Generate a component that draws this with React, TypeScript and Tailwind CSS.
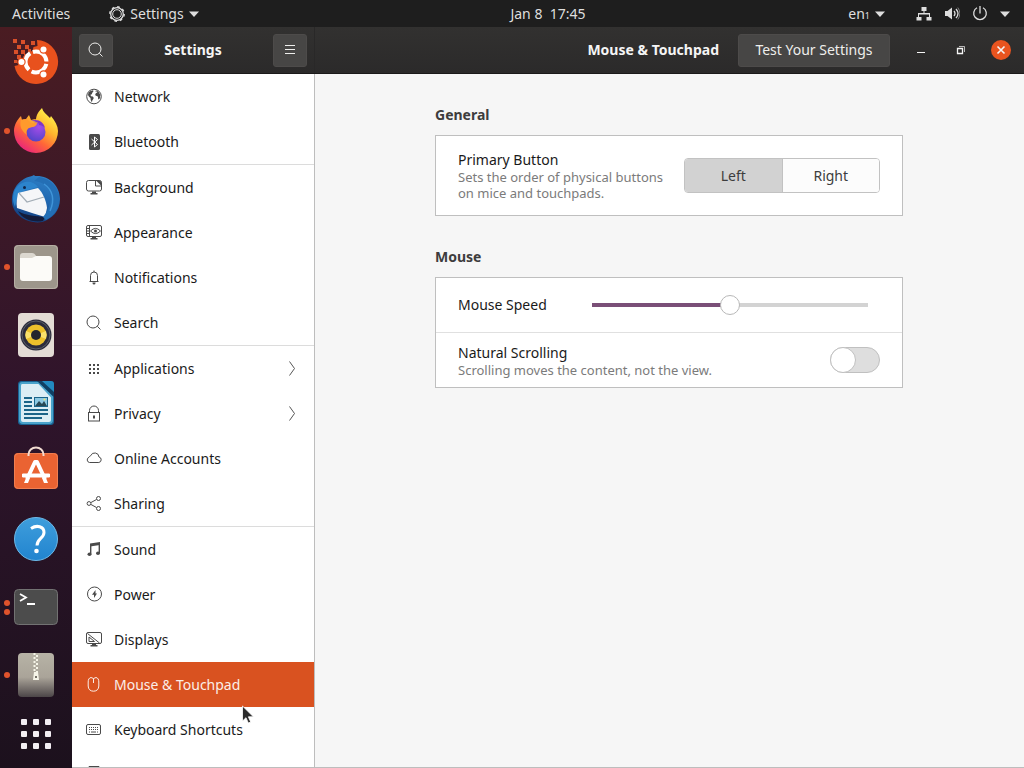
import { useState, type ReactNode } from "react";
import clsx from "clsx";

type NavItem = { label: string; icon: ReactNode; arrow?: boolean };

function Glyph({ children }: { children: ReactNode }) {
  return (
    <svg
      viewBox="0 0 16 16"
      className="h-4 w-4 shrink-0 overflow-visible"
      fill="none"
      stroke="currentColor"
      aria-hidden="true"
    >
      {children}
    </svg>
  );
}

const searchGlyph = (
  <Glyph>
    <circle cx="7" cy="7" r="6" />
    <path d="m11.3 11.3 3.2 3.2" />
  </Glyph>
);

const groups: NavItem[][] = [
  [
    {
      label: "Network",
      icon: (
        <Glyph>
          <circle cx="8" cy="7.5" r="7.3" />
          <path
            d="M2.500 3.500 4.500 2l2.500-.7.500 1-1.200 1.400-.5 1.500-1.300.6.5 1.400 1.800.4 1 1.300-.8 1.700-.7 1-.4 1.800-1.200-2.300-.2-2-1.500-1.300L2 6ZM10 1.300l2.600 1.400 1.700 3-.2 3-1.100 1.800-.9-.5-.1-2.200-1.100-.8-1.200-.2-.5-1.500.9-1.300 1.200-.5-.4-.9-1.200.2L9.500 2.200Z"
            fill="currentColor"
            stroke="none"
          />
        </Glyph>
      ),
    },
    {
      label: "Bluetooth",
      icon: (
        <Glyph>
          <rect x="3" y="0" width="11" height="16" rx="1.5" fill="currentColor" stroke="none" />
          <path d="m5.500 5 6 5.500L8.500 13V3l3 2.500-6 5.500" stroke="white" />
        </Glyph>
      ),
    },
  ],
  [
    {
      label: "Background",
      icon: (
        <Glyph>
          <path d="M9 .5H2.500a2 2 0 0 0-2 2V9a2 2 0 0 0 2 2h11a2 2 0 0 0 2-2V6M9 .5h4.500a2 2 0 0 1 2 2V6" />
          <path d="M9.500 1v5h6" />
          <path d="M10 .5h4l1.500 2V6Z" fill="currentColor" stroke="none" />
          <path d="M6 11.500h4V13h1.500v1.500h-7V13H6Z" fill="currentColor" stroke="none" />
        </Glyph>
      ),
    },
    {
      label: "Appearance",
      icon: (
        <Glyph>
          <rect x=".5" y=".5" width="15" height="11" rx="1.5" />
          <path d="M3.500 1v10M1 3.500h2.500M1 6h2.500M1 8.500h2.500" />
          <path d="M4.500 6Q9.500.8 14.500 6 9.500 11.200 4.500 6Z" />
          <circle cx="9.5" cy="6" r="1.500" fill="currentColor" stroke="none" />
          <path d="M6 11.500h4V13h1.500v1.500h-7V13H6Z" fill="currentColor" stroke="none" />
        </Glyph>
      ),
    },
    {
      label: "Notifications",
      icon: (
        <Glyph>
          <path d="M3.500 11.500h9M4.500 11.500V5.500a3.500 3.500 0 0 1 7 0v6M8 .5V2" />
          <path d="M6.500 12.500h3v.5a1.500 1.500 0 0 1-3 0Z" fill="currentColor" stroke="none" />
        </Glyph>
      ),
    },
    { label: "Search", icon: searchGlyph },
  ],
  [
    {
      label: "Applications",
      arrow: true,
      icon: (
        <Glyph>
          <path d="M3 4h2M7 4h2M11 4h2M3 8h2M7 8h2M11 8h2M3 12h2M7 12h2M11 12h2" strokeWidth="2" />
        </Glyph>
      ),
    },
    {
      label: "Privacy",
      arrow: true,
      icon: (
        <Glyph>
          <rect x="2.5" y="6.500" width="11" height="8.500" />
          <path d="M3.500 6.500V4.500a4.500 4.500 0 0 1 9 0v2" />
          <path d="M8 9.500v3" strokeWidth="2" />
        </Glyph>
      ),
    },
    {
      label: "Online Accounts",
      icon: (
        <Glyph>
          <path d="M3.500 11.500h9.300a2.800 2.800 0 0 0 .2-5.500 4.300 4.300 0 0 0-8.300-1.300A3 3 0 0 0 3 6.300a2.700 2.700 0 0 0 .5 5.200Z" />
        </Glyph>
      ),
    },
    {
      label: "Sharing",
      icon: (
        <Glyph>
          <circle cx="3" cy="7.500" r="1.900" />
          <circle cx="12.500" cy="2.500" r="2" />
          <circle cx="12.500" cy="12.500" r="2" />
          <path d="m5 6.500 5.500-3M5 8.500l5.500 3" />
        </Glyph>
      ),
    },
  ],
  [
    {
      label: "Sound",
      icon: (
        <Glyph>
          <path d="M4 1.500 14 0v3L4 4.500Z" fill="currentColor" stroke="none" />
          <path d="M4.700 2v10M13.300 1v10" strokeWidth="1.400" />
          <ellipse cx="3.500" cy="12.300" rx="2" ry="1.800" fill="currentColor" stroke="none" />
          <ellipse cx="12" cy="11.300" rx="2" ry="1.800" fill="currentColor" stroke="none" />
        </Glyph>
      ),
    },
    {
      label: "Power",
      icon: (
        <Glyph>
          <circle cx="8.500" cy="7" r="7" />
          <path d="M9.500 3 6 7.700h2v3.300l3-4.400H9.500Z" fill="currentColor" stroke="none" />
        </Glyph>
      ),
    },
    {
      label: "Displays",
      icon: (
        <Glyph>
          <rect x=".5" y=".5" width="15" height="11" rx="1.500" />
          <path d="m1.500 1.500 12 9.500M3 9.500V5l5.500 4.500Z" />
          <path d="M6 11.500h4V13h1.500v1.500h-7V13H6Z" fill="currentColor" stroke="none" />
        </Glyph>
      ),
    },
    {
      label: "Mouse & Touchpad",
      icon: (
        <Glyph>
          <path d="M5 .5 7.500 1.500 10 .5c2 .4 2.800 2 2.800 4.500v4c0 3.200-2 5.200-5.300 5.200S2.200 12.200 2.200 9V5C2.200 2.500 3 .9 5 .5ZM7.500 1.500V6" />
        </Glyph>
      ),
    },
    {
      label: "Keyboard Shortcuts",
      icon: (
        <Glyph>
          <rect x=".5" y="2.500" width="14" height="10" rx="1.500" />
          <path d="M3 5.500h1m1 0h1m1 0h1m1 0h1m1 0h1M3 7.500h1m1 0h1m1 0h1m1 0h1m1 0h1M3 10h1m1 0h5m1 0h1" />
        </Glyph>
      ),
    },
    {
      label: "Printers",
      icon: (
        <Glyph>
          <path d="M3 4V-.5h10V4M3.500 10.500H.5V4.500h15v6h-3M3.500 8.500h9v5h-9Z" />
        </Glyph>
      ),
    },
  ],
];

/* Dock icons, all on a 44x44 canvas */
function DockSvg({ children }: { children: ReactNode }) {
  return (
    <svg viewBox="0 0 44 44" className="h-11 w-11 overflow-visible" fill="none" aria-hidden="true">
      {children}
    </svg>
  );
}

const dockItems: { label: string; dots: number; icon: ReactNode }[] = [
  {
    label: "Install Ubuntu",
    dots: 0,
    icon: (
      <DockSvg>
        <path d="M23-1a22 22 0 1 1-22.500 26l4-1 1-4 3 0 1-5 4 0 1-4 4-1 1-4 4-1Z" fill="#e8511d" />
        <path
          d="M-1-2h4v4h-4ZM7-1h4v4H7ZM17 0h4v4h-4ZM3 4h4v4H3ZM11 4h4v4h-4ZM0 9h4v4H0ZM7 9h4v4H7ZM14 8h3v3h-3ZM3 14h4v4H3ZM10 13h3v3h-3ZM0 19h3v3H0Z"
          fill="#d9502a"
        />
        <circle cx="22" cy="21" r="10.500" stroke="white" strokeWidth="4" strokeDasharray="19 3" strokeDashoffset="-2" />
        <circle cx="7.500" cy="21" r="4.200" fill="#e8511d" />
        <circle cx="29.500" cy="8.500" r="4.200" fill="#e8511d" />
        <circle cx="29.500" cy="33.500" r="4.200" fill="#e8511d" />
        <circle cx="7.500" cy="21" r="3" fill="white" />
        <circle cx="29.500" cy="8.500" r="3" fill="white" />
        <circle cx="29.500" cy="33.500" r="3" fill="white" />
      </DockSvg>
    ),
  },
  {
    label: "Firefox",
    dots: 1,
    icon: (
      <DockSvg>
        <defs>
          <linearGradient id="fox" x1="36" y1="3" x2="9" y2="40" gradientUnits="userSpaceOnUse">
            <stop stopColor="#fff24a" />
            <stop offset=".35" stopColor="#ffb52e" />
            <stop offset=".65" stopColor="#ff6638" />
            <stop offset="1" stopColor="#eb2878" />
          </linearGradient>
          <radialGradient id="foxGlobe" cx=".65" cy=".25" r=".8">
            <stop stopColor="#a44ce8" />
            <stop offset="1" stopColor="#5144c9" />
          </radialGradient>
        </defs>
        <path
          d="M28-1c1 4 4 6 8 10l1-2c4 5 7 10 7 15a22 22 0 0 1-44 0C0 16 3 11 7 7l1 4c2-1 3-1 4-1l3-4 2 5c3-1 6-1 5 0 0-5 3-9 6-12Z"
          fill="url(#fox)"
        />
        <circle cx="22" cy="23" r="9.500" fill="url(#foxGlobe)" />
        <path d="M7 11c4-2 7 0 10 3h6c0 4-5 4-8 5-3 2-3 5-2 7-5-4-8-8-6-15Z" fill="#ff9a2c" />
        <path d="M17 12c6-3 13 1 14 7-2-2-4-3-6-3 1-2-4-4-8-4Z" fill="#7d37c7" />
      </DockSvg>
    ),
  },
  {
    label: "Thunderbird",
    dots: 0,
    icon: (
      <DockSvg>
        <defs>
          <linearGradient id="bird" x1="30" y1="0" x2="14" y2="44" gradientUnits="userSpaceOnUse">
            <stop stopColor="#2f80c6" />
            <stop offset=".5" stopColor="#1f66af" />
            <stop offset="1" stopColor="#143f80" />
          </linearGradient>
        </defs>
        <path d="M18-1 20-2l1 1c14-1 25 10 25 23 0 12-8 20-18 23-12 2-25-4-29-15-4-14 4-28 19-31Z" fill="url(#bird)" />
        <path d="M4 34c8 5 18 5 27 6l-2 4C19 46 8 42 4 34Z" fill="#141c3a" />
        <path d="M-1 22c0-9 4-15 12-17 6-1 10 1 13 5l-14 4-6 3-3 13c-1-3-2-5-2-8Z" fill="#2c84cc" />
        <path d="m4 16 20-5c5 5 8 12 9 20l-2 9-13-4-15-5c-1-5 0-10 1-15Z" fill="#f5f6f8" />
        <path d="m5 16 8 9 17-5" stroke="#a3adb6" strokeWidth="1.200" />
        <path d="M20 4c12 1 18 9 16 21-1 6-3 10-7 15l3 3c8-4 13-11 13-20C45 10 37 2 25 0Z" fill="#246fb5" />
        <path d="M30 7c9 6 11 16 6 27" stroke="#3f94d8" strokeWidth="1.500" />
        <circle cx="10.500" cy="10.500" r="1.500" fill="#10264a" />
      </DockSvg>
    ),
  },
  {
    label: "Files",
    dots: 1,
    icon: (
      <DockSvg>
        <rect width="44" height="44" rx="4" fill="#9d968b" />
        <rect x=".5" y=".5" width="43" height="43" rx="4" stroke="#b7b0a5" />
        <path d="M6 11c0-2 1-3 3-3h9c2 0 3 1 4 3v4H6Z" fill="#dcd8d0" />
        <path d="M6 13h12l4-2h13c2 0 3 1 3 3v19c0 2-1 3-3 3H9c-2 0-3-1-3-3Z" fill="#fcfbf8" />
      </DockSvg>
    ),
  },
  {
    label: "Rhythmbox",
    dots: 0,
    icon: (
      <DockSvg>
        <rect x="4" width="36" height="44" rx="4" fill="#e3dcd5" />
        <circle cx="22" cy="22" r="15.500" fill="#2b2c3c" />
        <circle cx="22" cy="22" r="14" stroke="#5b6068" />
        <circle cx="22" cy="22" r="10.500" fill="#ecc12c" />
        <path d="M22 22 12 18a11 11 0 0 0 0 8ZM22 22l10-4a11 11 0 0 1 0 8Z" fill="#fae26b" />
        <circle cx="22" cy="22" r="5" fill="#25252d" />
      </DockSvg>
    ),
  },
  {
    label: "LibreOffice Writer",
    dots: 0,
    icon: (
      <DockSvg>
        <path d="M8 0h20l12 13v27c0 3-1 4-4 4H8c-3 0-4-1-4-4V4c0-3 1-4 4-4Z" fill="#196393" />
        <path d="M8 2h17l13 14v23c0 2-1 3-3 3H9c-2 0-3-1-3-3V5c0-2 1-3 2-3Z" fill="#dceef5" stroke="#4aa3cb" strokeWidth="2" />
        <path d="M23 0h14c2 0 3 1 3 3v13Z" fill="#103f63" />
        <path d="M28 0h9c2 0 3 1 3 3v8Z" fill="#238ac0" />
        <path d="M10 17h8M10 21h8M10 25h8M10 29h24M10 33h24M10 37h18" stroke="#1b6589" strokeWidth="2" />
        <rect x="20" y="16" width="14" height="10" fill="#1b6589" />
        <rect x="21" y="17" width="12" height="8" fill="#8cc9e3" />
        <path d="m21 25 4-5 3 3 2-3 3 5Z" fill="#274855" />
        <circle cx="30.500" cy="18.500" r="1" fill="#f2e56b" />
      </DockSvg>
    ),
  },
  {
    label: "Ubuntu Software",
    dots: 0,
    icon: (
      <DockSvg>
        <rect y="4" width="44" height="36" rx="4" fill="#ea6332" />
        <rect x=".5" y="4.500" width="43" height="35" rx="4" stroke="#f07f51" />
        <path d="M14.500 7V5.500a7.500 7 0 0 1 15 0V7" stroke="#f3ddd2" strokeWidth="2" />
        <path d="m13 30 8-17h2l8 17" stroke="white" strokeWidth="4" strokeLinejoin="round" />
        <path d="M8.500 25h27v3h-27Z" fill="white" stroke="white" strokeLinejoin="round" />
        <path d="m12 29-2 5h4l2-5ZM28 29l2 5h4l-2-5Z" fill="white" />
      </DockSvg>
    ),
  },
  {
    label: "Help",
    dots: 0,
    icon: (
      <DockSvg>
        <defs>
          <linearGradient id="help" x1="0" y1="0" x2="0" y2="1">
            <stop stopColor="#3f9edc" />
            <stop offset="1" stopColor="#2184cf" />
          </linearGradient>
        </defs>
        <circle cx="22" cy="22" r="21.500" fill="url(#help)" stroke="#6db9e8" />
        <path d="M17 11.500c6-4 13-2 13 4 0 6-7 6-7 13" stroke="white" strokeWidth="3" />
        <circle cx="22.500" cy="34" r="2.300" fill="white" />
      </DockSvg>
    ),
  },
  {
    label: "Terminal",
    dots: 2,
    icon: (
      <DockSvg>
        <rect x=".5" y="4.500" width="43" height="35" rx="4" fill="#4c4c4c" stroke="#727272" />
        <path d="m6 9 6 3.500L6 16M13 19h8" stroke="white" strokeWidth="1.800" />
      </DockSvg>
    ),
  },
  {
    label: "Archive Manager",
    dots: 1,
    icon: (
      <DockSvg>
        <defs>
          <linearGradient id="zip" x1="0" y1="0" x2="0" y2="1">
            <stop stopColor="#b7b3a6" />
            <stop offset=".55" stopColor="#aaa499" />
            <stop offset="1" stopColor="#4c4648" />
          </linearGradient>
        </defs>
        <rect x="4" width="36" height="44" rx="4" fill="url(#zip)" />
        <path d="M20.500 0v20" stroke="#f6f5e8" strokeWidth="2" strokeDasharray="2 2" />
        <path d="M23 2v18" stroke="#f6f5e8" strokeWidth="2" strokeDasharray="2 2" />
        <path d="M20 19h4l1 8h-6Z" fill="#f6f5e8" />
        <path d="M21 23h2v2h-2Z" fill="#77736a" />
      </DockSvg>
    ),
  },
];

function Caret() {
  return (
    <svg viewBox="0 0 10 6" className="h-[6px] w-[10px]" fill="currentColor" aria-hidden="true">
      <path d="M0 .5h10L5 6Z" />
    </svg>
  );
}

function TopBar() {
  return (
    <header className="flex h-[27px] shrink-0 items-center bg-[#1e1e1e] pr-[14px] pl-3 text-sm text-[#dedede]">
      <button className="mr-[39px]">Activities</button>
      <button className="flex items-center gap-[5px]">
        <svg viewBox="0 0 16 16" className="h-4 w-4" fill="none" stroke="currentColor" aria-hidden="true">
          <circle cx="8" cy="8" r="6.300" strokeWidth="1.300" />
          <circle cx="8" cy="8" r="4.300" />
          <circle cx="8" cy="8" r="7.200" strokeWidth="1.400" strokeDasharray="2.600 3.050" />
        </svg>
        Settings
        <Caret />
      </button>
      <button className="flex-1 pl-[49px] whitespace-pre">Jan 8  17:45</button>
      <button className="flex items-center gap-[5px]">
        <span>
          en<span className="text-[9px]">1</span>
        </span>
        <Caret />
      </button>
      <button aria-label="System menu" className="ml-[31px] flex items-center gap-3">
        <svg viewBox="0 0 16 16" className="h-4 w-4" fill="currentColor" aria-hidden="true">
          <path d="M5.500 1h5v4h-2v2H14v4h1.500v3.500h-5V11H13V8.500H3V11h2.500v3.500h-5V11H2V7h5.500V5h-2Z" />
        </svg>
        <svg viewBox="0 0 16 16" className="h-4 w-4" fill="none" stroke="currentColor" aria-hidden="true">
          <path d="M1 5h2.500L8 1.500v12L3.500 10H1Z" fill="currentColor" stroke="none" />
          <path d="M10 5q2 2.500 0 5M12 3q4 4.500 0 9" strokeWidth="1.300" />
          <path d="M13.800 1.500q4.200 6 0 12" opacity=".5" />
        </svg>
        <svg viewBox="0 0 16 16" className="h-4 w-4" fill="none" stroke="currentColor" strokeWidth="1.300" aria-hidden="true">
          <path d="M5 1.700a6.300 6.300 0 1 0 6 0M8 0v7.500" />
        </svg>
        <Caret />
      </button>
    </header>
  );
}

function Dock() {
  return (
    <nav
      aria-label="Dock"
      className="flex w-[72px] shrink-0 flex-col overflow-hidden bg-linear-to-b from-[#4a1c22] via-[#2f142b] to-[#1c111d] pt-[2px]"
    >
      {dockItems.map((item) => (
        <button
          key={item.label}
          aria-label={item.label}
          className="relative flex h-[68px] shrink-0 items-center justify-center"
        >
          <span className="absolute top-0 left-1 flex h-full flex-col justify-center gap-[3px]">
            {Array.from({ length: item.dots }, (_, i) => (
              <span key={i} className="h-[6px] w-[6px] rounded-full bg-[#e0532c]" />
            ))}
          </span>
          {item.icon}
        </button>
      ))}
      <button aria-label="Show Applications" className="flex h-[50px] shrink-0 items-center justify-center">
        <span className="grid grid-cols-3 gap-[6px]">
          {Array.from({ length: 9 }, (_, i) => (
            <span key={i} className="h-[6px] w-[6px] rounded-[1px] bg-[#f3eef3]" />
          ))}
        </span>
      </button>
    </nav>
  );
}

const headerButton =
  "flex h-[33px] items-center justify-center rounded-[3px] border border-[#4d4b4a] bg-[#474645] text-[#eeeeec]";

function TitleBar() {
  return (
    <div className="flex h-[47px] shrink-0 border-b border-[#1b1a1a] bg-linear-to-b from-[#323130] to-[#2b2a2a] text-sm text-[#f5f5f5]">
      <div className="flex w-[243px] shrink-0 items-center justify-between border-r border-[#292828] px-[7px]">
        <button aria-label="Search" className={clsx(headerButton, "w-[34px]")}>
          {searchGlyph}
        </button>
        <h1 className="font-bold">Settings</h1>
        <button aria-label="Menu" className={clsx(headerButton, "w-[34px]")}>
          <Glyph>
            <path d="M3 3.500h10M3 7.500h10M3 11.500h10" />
          </Glyph>
        </button>
      </div>
      <div className="flex flex-1 items-center justify-end pr-[13px]">
        <h2 className="mr-[19px] font-bold">Mouse &amp; Touchpad</h2>
        <button className={clsx(headerButton, "mr-[23px] w-[152px]")}>Test Your Settings</button>
        <div className="flex items-center gap-6">
          <button aria-label="Minimize">
            <Glyph>
              <path d="M4 10.500h8" />
            </Glyph>
          </button>
          <button aria-label="Restore">
            <Glyph>
              <path d="M4.500 6.500h5v5h-5Z" strokeWidth="1.300" />
              <path d="M6 4.500h5.500V10" opacity=".7" />
            </Glyph>
          </button>
          <button
            aria-label="Close"
            className="-ml-[2px] flex h-5 w-5 items-center justify-center rounded-full bg-[#e9541f]"
          >
            <Glyph>
              <path d="m4.500 4.500 7 7m0-7-7 7" strokeWidth="1.600" />
            </Glyph>
          </button>
        </div>
      </div>
    </div>
  );
}

function Sidebar({ active, onSelect }: { active: string; onSelect: (label: string) => void }) {
  return (
    <nav
      aria-label="Settings panels"
      className="w-[243px] shrink-0 overflow-y-auto border-r border-[#bdbdbd] bg-white [scrollbar-width:none]"
    >
      {groups.map((group, i) => (
        <ul key={i} className={clsx(i > 0 && "border-t border-[#dcdcdc]")}>
          {group.map((item) => (
            <li key={item.label}>
              <button
                onClick={() => onSelect(item.label)}
                className={clsx(
                  "flex h-[45px] w-full items-center gap-3 px-[14px] text-left text-sm leading-none",
                  item.label === active ? "bg-[#d95220] text-[#fbeee8]" : "text-[#1a1a1a]",
                )}
              >
                <span className={clsx(item.label !== active && "text-[#4a4a4a]")}>{item.icon}</span>
                <span className="flex-1">{item.label}</span>
                {item.arrow && (
                  <span className="text-[#555]">
                    <Glyph>
                      <path d="m5.500.5 5 7-5 7" />
                    </Glyph>
                  </span>
                )}
              </button>
            </li>
          ))}
        </ul>
      ))}
    </nav>
  );
}

function MousePanel() {
  const [primary, setPrimary] = useState("Left");
  const [speed, setSpeed] = useState(50);
  const [natural, setNatural] = useState(false);

  return (
    <main className="flex-1 overflow-hidden bg-[#f6f6f6] pt-[31px] pr-[25px] pl-6 text-sm text-[#1a1a1a]">
      <div className="mx-auto max-w-[468px]">
        <section>
          <h3 className="mb-[10px] leading-5 font-bold text-[#3d3d3d]">General</h3>
          <div className="flex items-center justify-between border border-[#bfbfbf] bg-white px-[22px] py-[14px]">
            <div className="w-[212px]">
              <p id="primary-button" className="leading-[19px]">Primary Button</p>
              <p className="text-[13px] leading-4 text-[#7b7b7b]">
                Sets the order of physical buttons on mice and touchpads.
              </p>
            </div>
            <div
              role="group"
              aria-labelledby="primary-button"
              className="flex h-[35px] w-[196px] overflow-hidden rounded-[4px] border border-[#c2c2c2]"
            >
              {["Left", "Right"].map((side) => (
                <button
                  key={side}
                  aria-pressed={primary === side}
                  onClick={() => setPrimary(side)}
                  className={clsx(
                    "flex-1 border-[#c2c2c2] text-[#3d3d3d] first:border-r",
                    primary === side ? "bg-[#d2d2d2]" : "bg-[#fcfcfc]",
                  )}
                >
                  {side}
                </button>
              ))}
            </div>
          </div>
        </section>

        <section className="mt-[31px]">
          <h3 className="mb-[10px] leading-5 font-bold text-[#3d3d3d]">Mouse</h3>
          <div className="border border-[#bfbfbf] bg-white">
            <div className="flex h-[54px] items-center justify-between pr-[34px] pl-[22px]">
              <label htmlFor="speed">Mouse Speed</label>
              <input
                id="speed"
                type="range"
                value={speed}
                onChange={(e) => setSpeed(Number(e.target.value))}
                className="h-5 w-[276px] appearance-none bg-[length:100%_4px] bg-center bg-no-repeat [&::-webkit-slider-thumb]:h-5 [&::-webkit-slider-thumb]:w-5 [&::-webkit-slider-thumb]:appearance-none [&::-webkit-slider-thumb]:rounded-full [&::-webkit-slider-thumb]:border [&::-webkit-slider-thumb]:border-[#b8b8b8] [&::-webkit-slider-thumb]:bg-white"
                style={{ backgroundImage: `linear-gradient(to right, #7a4f77 ${speed}%, #d3d3d3 ${speed}%)` }}
              />
            </div>
            <div className="flex h-[55px] items-center justify-between border-t border-[#e0e0e0] px-[22px]">
              <label htmlFor="natural">
                <span className="block leading-[19px]">Natural Scrolling</span>
                <span className="block text-[13px] leading-4 text-[#7b7b7b]">
                  Scrolling moves the content, not the view.
                </span>
              </label>
              <input
                id="natural"
                type="checkbox"
                role="switch"
                checked={natural}
                onChange={(e) => setNatural(e.target.checked)}
                className="flex h-[26px] w-[50px] appearance-none rounded-full border border-[#c0c0c0] bg-[#dedede] before:-m-px before:h-[26px] before:w-[26px] before:rounded-full before:border before:border-[#c0c0c0] before:bg-white checked:justify-end checked:bg-[#7a4f77]"
              />
            </div>
          </div>
        </section>
      </div>
    </main>
  );
}

export default function App() {
  const [active, setActive] = useState("Mouse & Touchpad");

  return (
    <div className="relative flex h-screen flex-col overflow-hidden font-['Noto_Sans','Open_Sans',sans-serif]">
      <TopBar />
      <div className="flex min-h-0 flex-1">
        <Dock />
        <div className="flex min-w-0 flex-1 flex-col border-b border-[#bdbdbd]">
          <TitleBar />
          <div className="flex min-h-0 flex-1">
            <Sidebar active={active} onSelect={setActive} />
            <MousePanel />
          </div>
        </div>
      </div>

      {/* Pointer */}
      <svg
        viewBox="0 0 12 19"
        className="pointer-events-none absolute top-[705px] left-[242px] h-[19px] w-3"
        aria-hidden="true"
      >
        <path d="M.5 1v15l3.500-3.300 2.300 5.300 2.400-1-2.300-5.200h5Z" fill="#2b2b2b" stroke="white" strokeWidth=".8" />
      </svg>
    </div>
  );
}
